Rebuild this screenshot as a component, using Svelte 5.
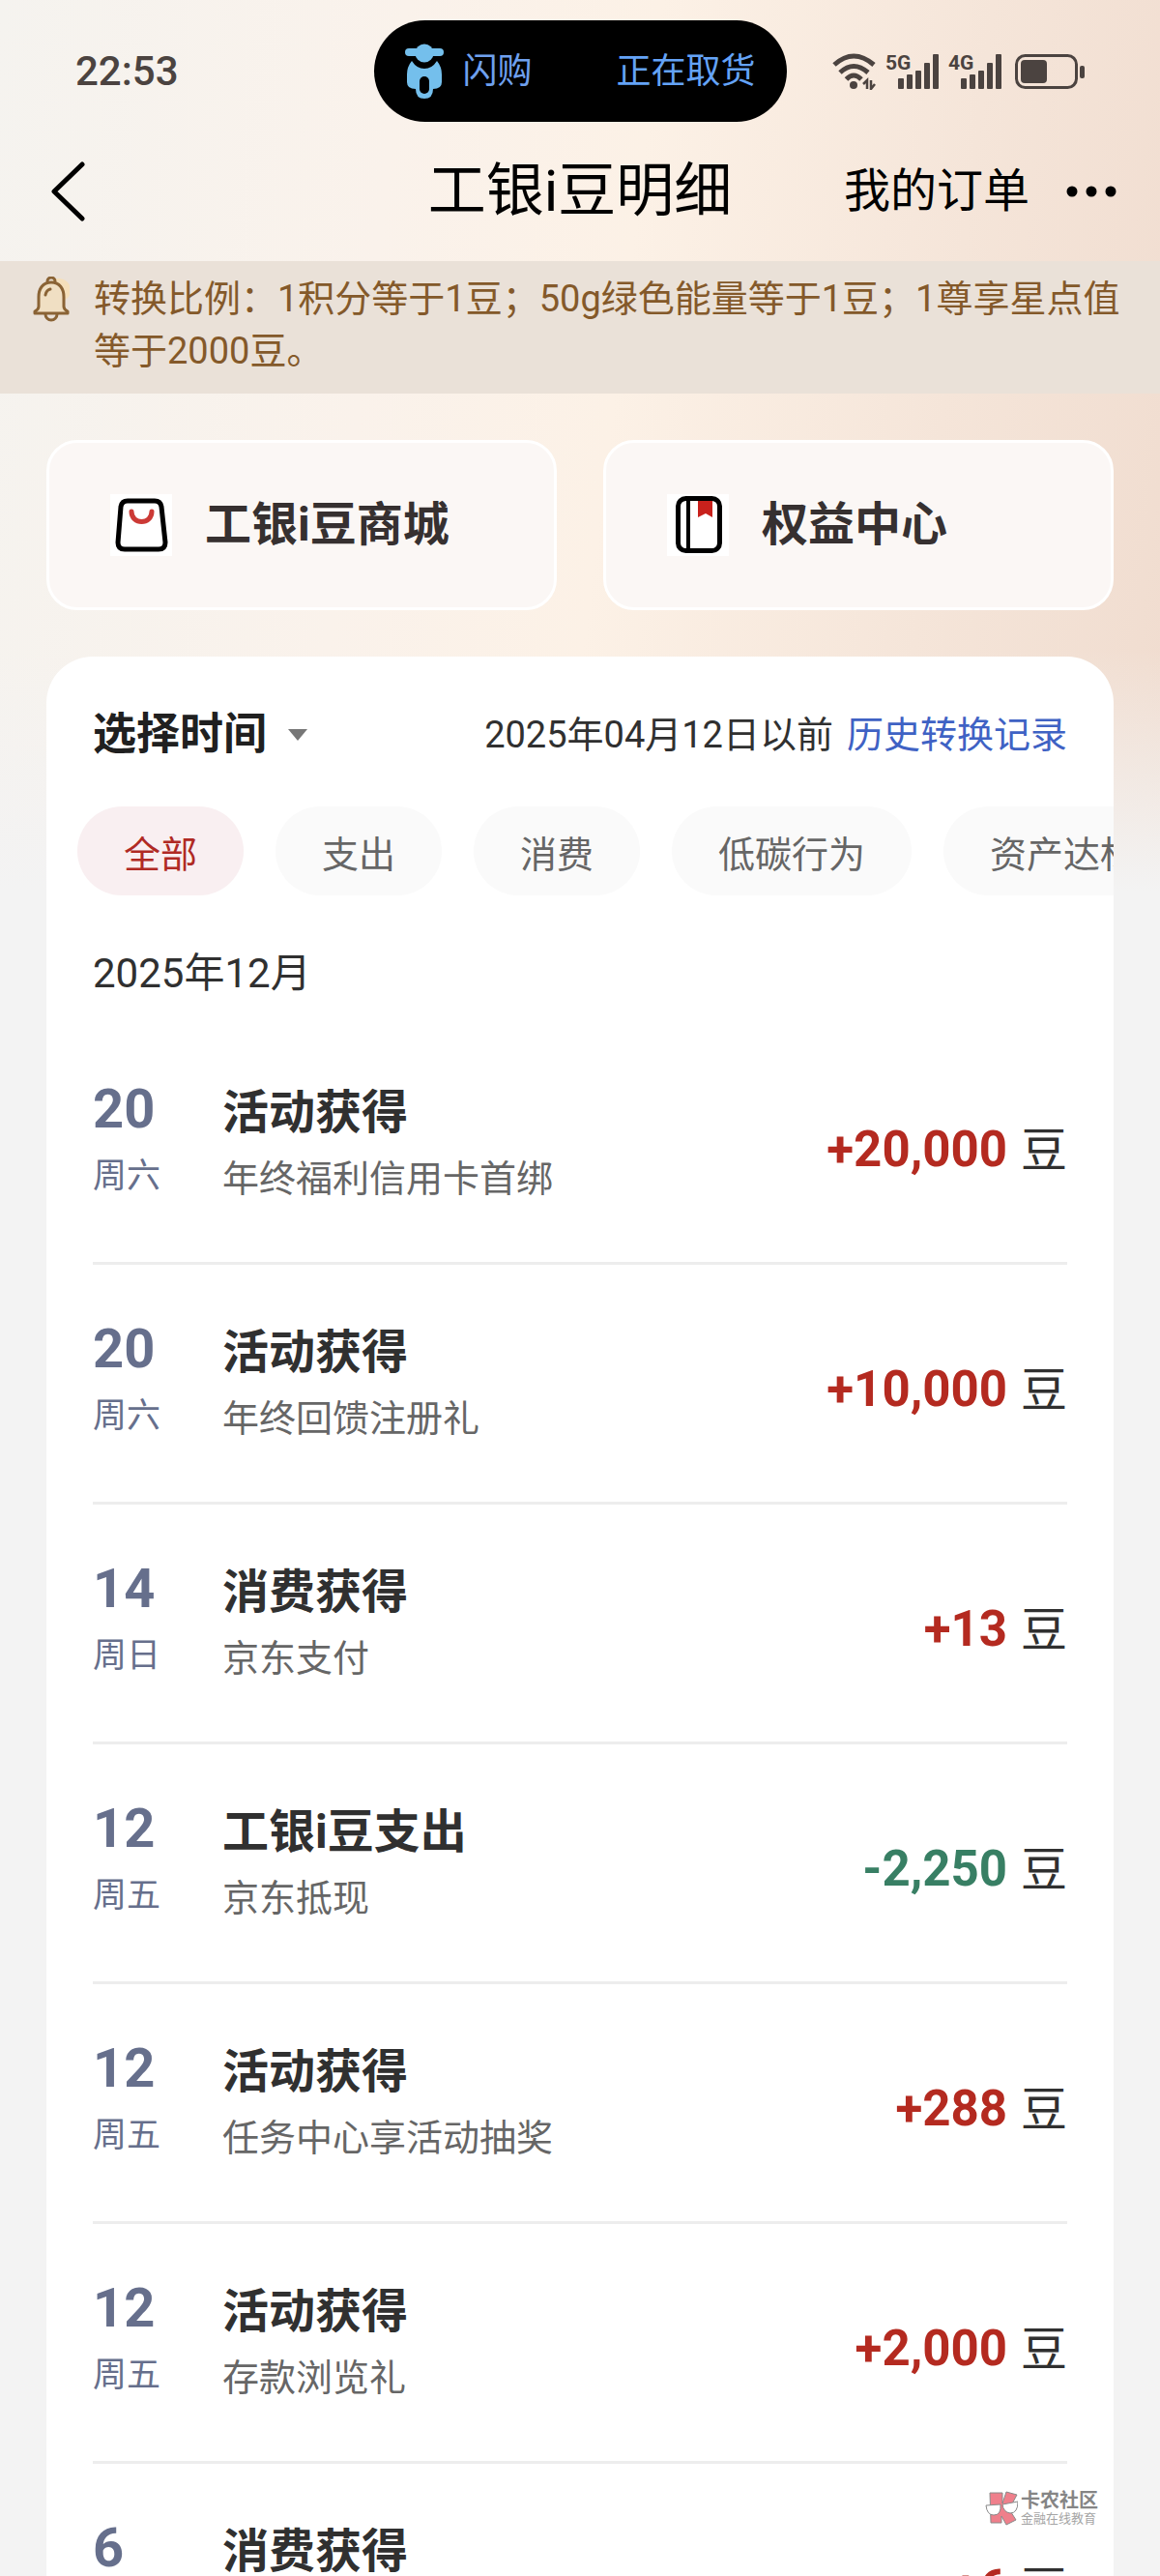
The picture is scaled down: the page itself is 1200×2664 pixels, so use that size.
<script>
	let activeTab = 'all';
	let period = 'default';

	const tabs = [
		{ id: 'all', label: '全部' },
		{ id: 'out', label: '支出' },
		{ id: 'consume', label: '消费' },
		{ id: 'lowcarbon', label: '低碳行为' },
		{ id: 'asset', label: '资产达标' }
	];

	const records = [
		{ day: 20, weekday: '周六', title: '活动获得', detail: '年终福利信用卡首绑', amount: 20000 },
		{ day: 20, weekday: '周六', title: '活动获得', detail: '年终回馈注册礼', amount: 10000 },
		{ day: 14, weekday: '周日', title: '消费获得', detail: '京东支付', amount: 13 },
		{ day: 12, weekday: '周五', title: '工银i豆支出', detail: '京东抵现', amount: -2250 },
		{ day: 12, weekday: '周五', title: '活动获得', detail: '任务中心享活动抽奖', amount: 288 },
		{ day: 12, weekday: '周五', title: '活动获得', detail: '存款浏览礼', amount: 2000 },
		{ day: 6, weekday: '周六', title: '消费获得', detail: '京东支付', amount: 6 }
	];

	function formatAmount(n) {
		const sign = n < 0 ? '-' : '+';
		return sign + Math.abs(n).toLocaleString('en-US');
	}
</script>

<div class="screen">
	<div class="status-bar">
		<span class="time">22:53</span>

		<div class="island">
			<svg width="40" height="58" viewBox="0 0 40 58" fill="#74bfec" aria-hidden="true">
				<path d="M7 18 Q12 26 20 26 Q28 26 33 18 Q38 24 38 32 V40 Q38 47 29 47 Q29 57 20 57 Q11 57 11 47 Q2 47 2 40 V32 Q2 24 7 18Z" />
				<circle cx="20" cy="10" r="13" fill="#000" />
				<rect x="0" y="5" width="40" height="8" rx="4" />
				<circle cx="20" cy="10" r="9.500" />
				<rect x="15" y="34" width="10" height="18" rx="5" fill="#000" />
			</svg>
			<span>闪购</span>
			<span class="island-state">正在取货</span>
		</div>

		<div class="signals">
			<svg width="45" height="38" viewBox="0 0 45 38" fill="none" stroke="#4b4340" stroke-width="5" aria-hidden="true">
				<path d="M2 12 Q22 -6 43 12" />
				<path d="M8 20 Q22 7 37 20" />
				<path d="M14.500 27 Q22 19 30 27" />
				<circle cx="22" cy="33" r="4" fill="#4b4340" stroke="none" />
				<path d="M36 37 V28 L32 32 M40 28 V37 L44 32" stroke-width="2.500" />
			</svg>
			{#each ['5G', '4G'] as net}
				<svg width="55" height="50" viewBox="0 -6 55 50" fill="#4b4340" aria-hidden="true">
					<text x="0" y="17" class="net">{net}</text>
					<rect x="13" y="26" width="6" height="11" rx="1" />
					<rect x="22" y="22" width="6" height="15" rx="1" />
					<rect x="31" y="18" width="6" height="19" rx="1" />
					<rect x="40" y="10" width="6" height="27" rx="1" />
					<rect x="49" y="1" width="6" height="36" rx="1" />
				</svg>
			{/each}
			<svg class="battery" width="72" height="38" viewBox="0 0 72 38" aria-hidden="true">
				<rect x="1.500" y="2.500" width="62" height="33" rx="9" fill="none" stroke="#4b4340" stroke-width="3" />
				<rect x="6" y="7" width="27" height="24" rx="4" fill="#4b4340" />
				<rect x="67" y="13" width="5" height="13" rx="2" fill="#4b4340" />
			</svg>
		</div>
	</div>

	<header class="nav">
		<button class="icon-btn back" aria-label="返回">
			<svg width="36" height="62" viewBox="0 0 36 62" fill="none" stroke="#000" stroke-width="5" stroke-linecap="round" stroke-linejoin="round">
				<path d="M32 3 L3 31 L32 59" />
			</svg>
		</button>
		<h1>工银i豆明细</h1>
		<div class="nav-right">
			<a href="#orders">我的订单</a>
			<button class="icon-btn" aria-label="更多">
				<svg width="52" height="12" viewBox="0 0 52 12">
					<circle cx="6" cy="6" r="5.500" />
					<circle cx="26" cy="6" r="5.500" />
					<circle cx="46" cy="6" r="5.500" />
				</svg>
			</button>
		</div>
	</header>

	<div class="notice">
		<svg width="38" height="48" viewBox="0 0 38 48" fill="none" stroke="#8a6335" stroke-width="3" stroke-linejoin="round" stroke-linecap="round" aria-hidden="true">
			<circle cx="27" cy="14" r="12" fill="#f5dfba" stroke="none" />
			<path d="M15 5 a4 4 0 0 1 8 0" />
			<path d="M19 6 C10 6 6 13 6 21 V31 Q6 34 2 36 V38 H36 V36 Q32 34 32 31 V21 C32 13 28 6 19 6Z" fill="#f0dfc3" />
			<path d="M13 39 a6 6 0 0 0 12 0" />
			<path d="M13 19 Q14 14 18 13" />
		</svg>
		<p>转换比例：1积分等于1豆；50g绿色能量等于1豆；1尊享星点值等于2000豆。</p>
	</div>

	<nav class="shortcuts">
		<a href="#mall" class="shortcut">
			<svg width="64" height="64" viewBox="0 0 64 64" fill="none" aria-hidden="true">
				<rect width="64" height="64" fill="#fff" />
				<path d="M18 7 H46 Q52 7 53 13 L57 50 Q57 57 50 57 H15 Q8 57 8 50 L11 13 Q12 7 18 7Z" stroke="#000" stroke-width="5" />
				<path d="M22 18 C22 32 43 32 43 18" stroke="#cc3a36" stroke-width="5" stroke-linecap="round" />
			</svg>
			<span>工银i豆商城</span>
		</a>
		<a href="#rights" class="shortcut">
			<svg width="64" height="64" viewBox="0 0 64 64" fill="none" aria-hidden="true">
				<rect width="64" height="64" fill="#fff" />
				<path d="M32 6 H47 V24 L40 20 L32 24Z" fill="#c8211c" />
				<rect x="11.500" y="4.500" width="43" height="54" rx="8" stroke="#000" stroke-width="5" />
				<path d="M22 5 V58" stroke="#000" stroke-width="4" />
			</svg>
			<span>权益中心</span>
		</a>
	</nav>

	<main class="card">
		<div class="card-head">
			<label class="period">
				<select bind:value={period} aria-label="选择时间">
					<option value="default">选择时间</option>
				</select>
				<svg width="22" height="14" viewBox="0 0 22 14" aria-hidden="true">
					<path d="M1 1 H21 L11 13Z" fill="#777" />
				</svg>
			</label>
			<p class="history">
				<span>2025年04月12日以前</span>
				<a href="#history">历史转换记录</a>
			</p>
		</div>

		<div class="tabs">
			{#each tabs as tab}
				<button class="tab" class:active={activeTab === tab.id} on:click={() => (activeTab = tab.id)}>
					{tab.label}
				</button>
			{/each}
		</div>

		<h2 class="month">2025年12月</h2>

		<ul class="records">
			{#each records as record}
				<li class="record">
					<div class="date">
						<span class="day">{record.day}</span>
						<span class="weekday">{record.weekday}</span>
					</div>
					<div class="info">
						<span class="title">{record.title}</span>
						<span class="detail">{record.detail}</span>
					</div>
					<div class="amount">
						<strong class:minus={record.amount < 0}>{formatAmount(record.amount)}</strong>
						<span>豆</span>
					</div>
				</li>
			{/each}
		</ul>
	</main>

	<div class="watermark">
		<svg width="34" height="36" viewBox="0 0 34 36" aria-hidden="true">
			<path d="M5 2 H18 V13 L22 1 L33 4 L25 19 L32 30 L22 35 L17 26 V33 H6Z" fill="#ef7f8b" stroke="#8a8a8a" stroke-width="1" />
			<path d="M1 15 L16 14 Q17 25 9 25 Q2 25 1 15Z" fill="#fff" stroke="#8a8a8a" stroke-width="1" />
			<path d="M18 14 L34 11 Q34 23 26 23 Q19 22 18 14Z" fill="#fff" stroke="#8a8a8a" stroke-width="1" />
		</svg>
		<div class="watermark-text">
			<span class="brand">卡农社区</span>
			<span class="slogan">金融在线教育</span>
		</div>
	</div>
</div>

<style>
	:global(body) {
		background: #f3f3f3;
	}

	.screen {
		position: relative;
		display: flex;
		flex-direction: column;
		height: 100vh;
		overflow: hidden;
		font-family: Roboto, 'Noto Sans CJK SC', sans-serif;
		color: #303030;
		background-color: #f3f3f3;
		background-image:
			linear-gradient(180deg, rgba(243, 243, 243, 0) 70%, #f3f3f3 96%),
			linear-gradient(97deg, #f5f3ef 0%, #faf2eb 32%, #fcf1e6 52%, #f5e5d9 78%, #f0dccf 100%);
		background-size: 100% 960px;
		background-repeat: no-repeat;
	}

	button,
	select {
		font: inherit;
		color: inherit;
		border: none;
		background: none;
		padding: 0;
		margin: 0;
		cursor: pointer;
	}

	a {
		color: inherit;
		text-decoration: none;
	}

	h1,
	h2,
	p,
	ul {
		margin: 0;
		padding: 0;
		font-weight: 400;
	}

	svg {
		display: block;
		flex-shrink: 0;
	}

	/* Status bar */
	.status-bar {
		display: grid;
		grid-template-columns: 1fr auto 1fr;
		align-items: center;
		padding: 21px 78px 0;
	}

	.time {
		font-size: 42px;
		font-weight: 500;
		color: #4b4340;
	}

	.island {
		display: flex;
		align-items: center;
		box-sizing: border-box;
		width: 427px;
		height: 105px;
		padding: 0 32px;
		border-radius: 53px;
		background: #000;
		color: #6fa0ee;
		font-size: 36px;
		line-height: 48px;
		gap: 20px;
	}

	.island-state {
		margin-left: auto;
		color: #64a3f7;
	}

	.signals {
		display: flex;
		align-items: center;
		justify-content: flex-end;
		gap: 10px;
	}

	.net {
		font-size: 21px;
		font-weight: 700;
	}

	.battery {
		margin-left: 4px;
	}

	/* Navigation */
	.nav {
		display: grid;
		grid-template-columns: 1fr auto 1fr;
		align-items: center;
		height: 144px;
		padding: 0 45px;
		color: #000;
	}

	.nav h1 {
		font-size: 60px;
		line-height: 80px;
	}

	.nav-right {
		display: flex;
		align-items: center;
		justify-content: flex-end;
		gap: 38px;
		font-size: 48px;
		line-height: 64px;
	}

	.icon-btn {
		justify-self: start;
	}

	.back {
		padding-left: 8px;
	}

	/* Notice */
	.notice {
		display: flex;
		gap: 25px;
		padding: 12px 26px 17px 34px;
		background: #eae1d8;
		color: #84592a;
		font-size: 38px;
		line-height: 54px;
	}

	.notice svg {
		margin-top: 4px;
	}

	/* Shortcuts */
	.shortcuts {
		display: grid;
		grid-template-columns: 1fr 1fr;
		gap: 48px;
		padding: 48px;
	}

	.shortcut {
		display: flex;
		align-items: center;
		gap: 34px;
		height: 170px;
		padding: 0 63px;
		border: 3px solid #fff;
		border-radius: 32px;
		background: #fbf7f5;
		color: #363030;
		font-size: 48px;
		font-weight: 700;
		line-height: 64px;
	}

	/* Card */
	.card {
		flex: 1;
		margin: 0 48px;
		border-radius: 48px 48px 0 0;
		background: #fff;
		overflow: hidden;
	}

	.card-head {
		display: flex;
		align-items: center;
		justify-content: space-between;
		padding: 51px 48px 0;
		line-height: 60px;
	}

	.period {
		display: flex;
		align-items: center;
		gap: 20px;
	}

	.period select {
		appearance: none;
		font-size: 45px;
		font-weight: 700;
		line-height: 60px;
		color: #202020;
	}

	.history {
		display: flex;
		gap: 14px;
		font-size: 38px;
	}

	.history a {
		color: #3f62c4;
	}

	.tabs {
		display: flex;
		gap: 33px;
		padding: 44px 0 0 32px;
		overflow: hidden;
	}

	.tab {
		flex-shrink: 0;
		height: 92px;
		padding: 0 48px;
		border-radius: 46px;
		background: #fafafa;
		color: #666;
		font-size: 38px;
	}

	.tab.active {
		background: #f9eff1;
		color: #b02a24;
	}

	.month {
		padding: 51px 48px 23px;
		font-size: 42px;
		line-height: 60px;
	}

	.records {
		list-style: none;
		padding: 0 48px;
	}

	.record {
		display: flex;
		height: 190px;
		padding-top: 55px;
		border-bottom: 3px solid #ededed;
	}

	.date,
	.info {
		display: flex;
		flex-direction: column;
	}

	.date {
		width: 134px;
		gap: 14px;
		color: #666f8c;
	}

	.day {
		font-size: 56px;
		font-weight: 700;
		line-height: 64px;
	}

	.weekday {
		font-size: 35px;
		line-height: 48px;
	}

	.info {
		flex: 1;
		gap: 12px;
		padding-top: 4px;
	}

	.title {
		font-size: 48px;
		font-weight: 700;
		line-height: 64px;
	}

	.detail {
		font-size: 38px;
		line-height: 48px;
		color: #666;
	}

	.amount {
		display: flex;
		align-items: baseline;
		gap: 14px;
		padding-top: 42px;
		font-size: 48px;
		line-height: 64px;
	}

	.amount strong {
		font-size: 51px;
		color: #b42a20;
	}

	.amount strong.minus {
		color: #387f64;
	}

	/* Watermark */
	.watermark {
		position: absolute;
		right: 64px;
		bottom: 52px;
		display: flex;
		align-items: center;
		gap: 3px;
	}

	.watermark-text {
		display: flex;
		flex-direction: column;
	}

	.brand {
		font-size: 20px;
		font-weight: 700;
		line-height: 22px;
		color: #858585;
	}

	.slogan {
		font-size: 13px;
		line-height: 15px;
		color: #a5a5a5;
	}
</style>
